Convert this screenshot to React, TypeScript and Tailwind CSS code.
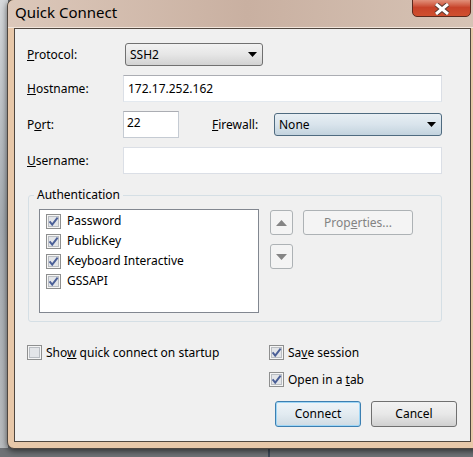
import React from "react";

const font = { fontFamily: '"Noto Sans", "Open Sans", sans-serif' };

function Check({ checked = true }: { checked?: boolean }) {
  return (
    <svg width="15" height="15" viewBox="0 0 15 15" className="shrink-0">
      <rect x="0.5" y="0.5" width="14" height="14" fill="#f5f5f5" stroke="#8e8f8f" />
      <rect x="2.5" y="2.5" width="10" height="10" fill="#e3e5e8" stroke="#b9bdc2" />
      {checked && (
        <path d="M3.6 7.4 L6.2 10.6 L11.6 3.6" stroke="#4a5f97" strokeWidth="1.9" fill="none" />
      )}
    </svg>
  );
}

function Arrow() {
  return (
    <svg width="9" height="5" viewBox="0 0 9 5" className="shrink-0">
      <path d="M0 0 H9 L4.5 5 Z" fill="#000" />
    </svg>
  );
}

export default function App() {
  return (
    <div
      className="w-[473px] h-[457px] relative overflow-hidden bg-[#6f7276] text-[12px] text-black"
      style={font}
    >
      {/* desktop strip left */}
      <div className="absolute left-0 top-0 w-[8px] h-[448px] bg-gradient-to-b from-[#d6d9dc] via-[#a6acb2] to-[#b9bcbf]" />
      <div className="absolute left-[268px] top-[448px] w-[2px] h-[9px] bg-[#3f4a58]" />
      {/* window */}
      <div className="absolute left-[7px] top-[-1px] w-[480px] h-[450px] rounded-[7px] border border-[#4e4640] bg-[#e8c8a9] shadow-[0_2px_6px_rgba(0,0,0,0.6)]">
        {/* title bar */}
        <div className="h-[28px] rounded-t-[7px] bg-gradient-to-r from-[#dcc8ba] via-[#c9b0a1] to-[#d7c4b6] relative border-b border-[#f2e6dc]">
          <div className="absolute left-[7px] top-[2px] text-[15px] leading-[20px] text-black">Quick Connect</div>
          <div className="absolute left-[404px] top-[-2px] w-[59px] h-[19px] rounded-b-[5px] border border-[#5b2a1e] bg-gradient-to-b from-[#e49a85] via-[#c7432a] to-[#d0502f] flex items-end justify-center pb-[1px]">
            <svg width="18" height="12" viewBox="0 0 18 12">
              <path d="M3 1 L15 11 M15 1 L3 11" stroke="#5a3a32" strokeWidth="5" />
              <path d="M3 1 L15 11 M15 1 L3 11" stroke="#ffffff" strokeWidth="3" />
            </svg>
          </div>
        </div>
        {/* client */}
        <div className="ml-[6px] w-[457px] h-[414px] border border-[#50473f] bg-[#f0f0f0] flex flex-col">
          {/* Protocol */}
          <div className="flex items-center h-[23px] mt-[14px]">
            <div className="ml-[12px] w-[98px]">
              <u>P</u>rotocol:
            </div>
            <div className="w-[138px] h-[23px] rounded-[3px] border border-[#707070] bg-gradient-to-b from-[#f2f2f2] via-[#e6e6e6] to-[#d2d2d2] flex items-center pl-[4px] pr-[5px]">
              <span className="flex-1">SSH2</span>
              <Arrow />
            </div>
          </div>
          {/* Hostname */}
          <div className="flex items-center h-[27px] mt-[9px]">
            <div className="ml-[12px] w-[96px]">
              <u>H</u>ostname:
            </div>
            <div className="w-[319px] h-[27px] border border-[#abadb3] border-b-[#e3e9ef] border-x-[#dbdfe6] bg-white flex items-center pl-[4px]">
              172.17.252.162
            </div>
          </div>
          {/* Port / Firewall */}
          <div className="flex items-center h-[27px] mt-[9px]">
            <div className="ml-[12px] w-[96px]">
              P<u>o</u>rt:
            </div>
            <div className="w-[56px] h-[27px] border border-[#c5cbd3] border-t-[#abadb3] bg-white pl-[3px] pt-[2px]">22</div>
            <div className="ml-[33px] w-[62px]">
              <u>F</u>irewall:
            </div>
            <div className="w-[168px] h-[23px] rounded-[3px] border border-[#4f6b80] bg-gradient-to-b from-[#e8eff4] via-[#d9e4ec] to-[#c3d3de] flex items-center pl-[4px] pr-[5px]">
              <span className="flex-1">None</span>
              <Arrow />
            </div>
          </div>
          {/* Username */}
          <div className="flex items-center h-[27px] mt-[9px]">
            <div className="ml-[12px] w-[96px]">
              <u>U</u>sername:
            </div>
            <div className="w-[319px] h-[27px] border border-[#dbdfe6] bg-white" />
          </div>
          {/* Authentication group */}
          <div className="relative ml-[13px] mt-[21px] w-[414px] h-[127px] border border-[#d5dfe5] rounded-[3px]">
            <div className="absolute left-[5px] top-[-9px] px-[3px] bg-[#f0f0f0] leading-[16px]">Authentication</div>
            <div className="flex mt-[13px] ml-[10px]">
              <div className="w-[220px] h-[104px] border border-[#828790] bg-white pt-[1px] pl-[6px] flex flex-col">
                {["Password", "PublicKey", "Keyboard Interactive", "GSSAPI"].map((t) => (
                  <div key={t} className="flex items-center h-[20px] gap-[6px]">
                    <Check />
                    <span>{t}</span>
                  </div>
                ))}
              </div>
              <div className="ml-[11px] mt-[1px] flex flex-col gap-[9px]">
                <div className="w-[23px] h-[25px] rounded-[3px] border border-[#adb2b5] bg-[#f4f4f4] flex items-center justify-center">
                  <svg width="11" height="6" viewBox="0 0 11 6">
                    <path d="M0 6 H11 L5.5 0 Z" fill="#858585" />
                  </svg>
                </div>
                <div className="w-[23px] h-[25px] rounded-[3px] border border-[#adb2b5] bg-[#f4f4f4] flex items-center justify-center">
                  <svg width="11" height="6" viewBox="0 0 11 6">
                    <path d="M0 0 H11 L5.5 6 Z" fill="#858585" />
                  </svg>
                </div>
              </div>
              <div className="ml-[10px] mt-[1px] w-[110px] h-[25px] rounded-[3px] border border-[#adb2b5] bg-[#f4f4f4] flex items-center justify-center text-[#838383]">
                <span>
                  Prop<u>e</u>rties...
                </span>
              </div>
            </div>
          </div>
          {/* bottom options */}
          <div className="flex mt-[23px]">
            <div className="ml-[12px] w-[242px] flex items-center gap-[4px] h-[15px]">
              <Check checked={false} />
              <span>
                Sho<u>w</u> quick connect on startup
              </span>
            </div>
            <div className="flex flex-col gap-[12px]">
              <div className="flex items-center gap-[4px] h-[15px]">
                <Check />
                <span>
                  Sa<u>v</u>e session
                </span>
              </div>
              <div className="flex items-center gap-[4px] h-[15px]">
                <Check />
                <span>
                  Open in a <u>t</u>ab
                </span>
              </div>
            </div>
          </div>
          <div className="flex mt-[14px] ml-[260px] gap-[10px]">
            <div className="w-[86px] h-[26px] rounded-[3px] border border-[#3c7fb1] bg-gradient-to-b from-[#eef4f8] via-[#e2ebf1] to-[#cfdbe3] shadow-[inset_0_0_0_1px_#9ed6f6] flex items-center justify-center">
              Connect
            </div>
            <div className="w-[86px] h-[26px] rounded-[3px] border border-[#707070] bg-gradient-to-b from-[#f2f2f2] via-[#e8e8e8] to-[#d0d0d0] flex items-center justify-center">
              Cancel
            </div>
          </div>
        </div>
      </div>
    </div>
  );
}
